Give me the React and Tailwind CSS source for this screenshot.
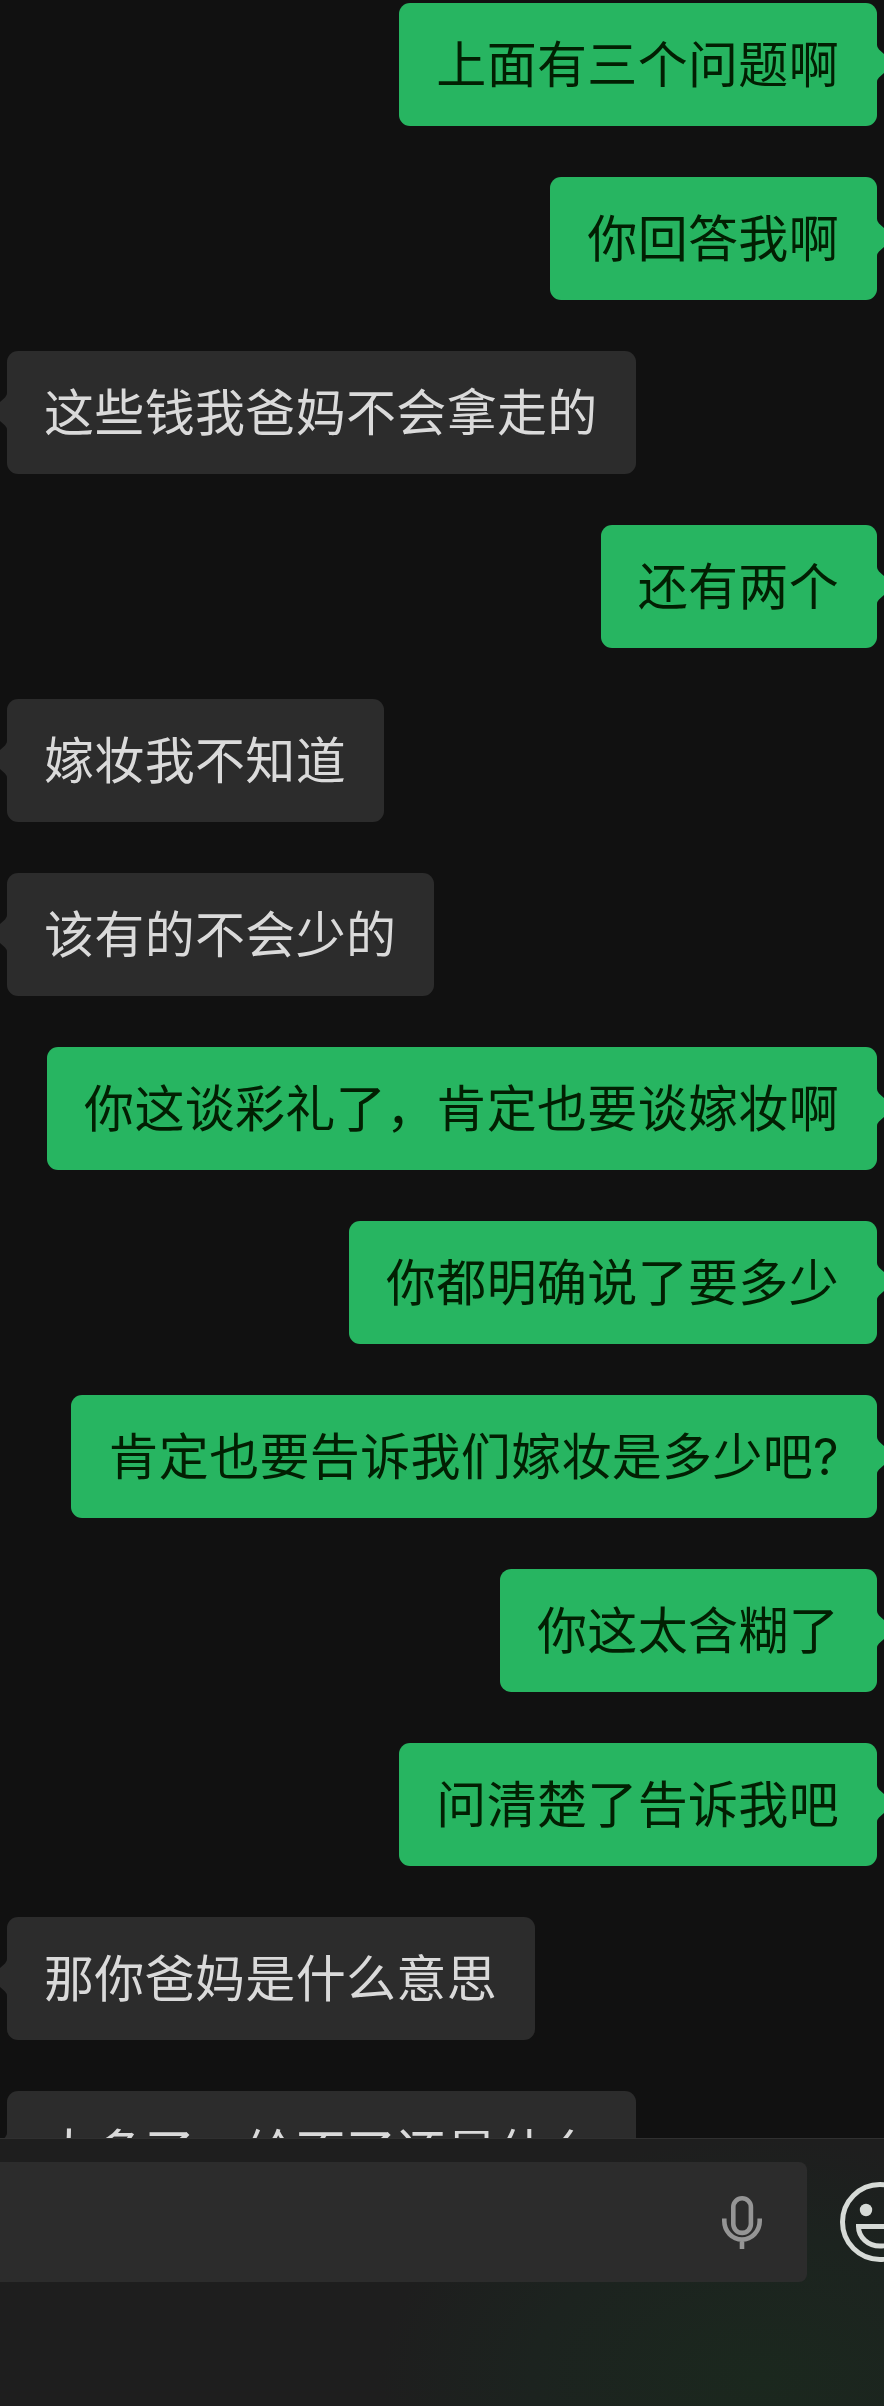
const messages = [
    { id: 1, mine: true, text: "上面有三个问题啊" },
    { id: 2, mine: true, text: "你回答我啊" },
    { id: 3, mine: false, text: "这些钱我爸妈不会拿走的" },
    { id: 4, mine: true, text: "还有两个" },
    { id: 5, mine: false, text: "嫁妆我不知道" },
    { id: 6, mine: false, text: "该有的不会少的" },
    { id: 7, mine: true, text: "你这谈彩礼了，肯定也要谈嫁妆啊" },
    { id: 8, mine: true, text: "你都明确说了要多少" },
    { id: 9, mine: true, text: "肯定也要告诉我们嫁妆是多少吧?" },
    { id: 10, mine: true, text: "你这太含糊了" },
    { id: 11, mine: true, text: "问清楚了告诉我吧" },
    { id: 12, mine: false, text: "那你爸妈是什么意思" },
    { id: 13, mine: false, text: "太多了，给不了还是什么" },
];

export default function App() {
    return (
        <div className="flex h-[2406px] w-[884px] flex-col overflow-hidden bg-[#111111] font-['Inter','Noto_Sans_CJK_SC',sans-serif]">
            <div className="flex h-[2138px] shrink-0 flex-col gap-[51px] overflow-hidden px-[7px] pt-[3px]">
                {messages.map(m => (
                    <Bubble key={m.id} mine={m.mine} text={m.text} />
                ))}
            </div>
            <Composer />
        </div>
    );
}

function Bubble({ mine, text }) {
    return (
        <div
            className={`relative flex h-[123px] shrink-0 items-center rounded-[11px] pr-[38px] pl-[37px] text-[50px] leading-none tracking-[0.33px] whitespace-nowrap ${mine
                ? "self-end bg-[#27b561] text-[#021f02]"
                : "self-start bg-[#2c2c2c] text-[#dadada]"
                }`}
        >
            <span>{text}</span>
            <Tail mine={mine} />
        </div>
    );
}

// Little pointer towards the avatar, flipped for incoming messages
function Tail({ mine }) {
    return (
        <svg
            viewBox="0 0 7 37"
            className={`absolute top-[42px] h-[37px] w-[7px] ${mine ? "left-full text-[#27b561]" : "right-full -scale-x-100 text-[#2c2c2c]"}`}
        >
            <path d="M0 0Q0 2.500 2 4.500L7 9V28L2 32.500Q0 34.500 0 37Z" fill="currentColor" />
        </svg>
    );
}

function Composer() {
    return (
        <div className="flex-1 border-t border-[#303030] bg-[#1e1e1e] bg-[radial-gradient(ellipse_380px_240px_at_760px_240px,#1b281e,#1c231f_60%,#1e1e1e)] pt-[23px]">
            <div className="flex items-center gap-[33px]">
                <div className="flex h-[120px] w-[807px] shrink-0 items-center justify-end rounded-r-lg bg-[#2c2c2c] pr-[45px]">
                    <MicIcon />
                </div>
                <SmileIcon />
            </div>
        </div>
    );
}

function MicIcon() {
    return (
        <svg viewBox="0 0 40 53" className="h-[53px] w-10" fill="none" stroke="#959595" strokeWidth="4.6">
            <rect x="11.3" y="2.3" width="17.6" height="34.6" rx="8.8" />
            <path d="M2.3 22.5V25a17.7 18.500 0 0 0 35.4 0V22.500M20 43V53" />
        </svg>
    );
}

function SmileIcon() {
    return (
        <svg viewBox="0 0 80 80" className="h-20 w-20 shrink-0" fill="none" stroke="#d7dbd7" strokeWidth="5">
            <circle cx="40" cy="40" r="37.5" />
            <circle cx="26" cy="28" r="6.2" fill="#d7dbd7" stroke="none" />
            <circle cx="54" cy="28" r="6.2" fill="#d7dbd7" stroke="none" />
            <path d="M18.5 44.5H61.5A21.5 19.5 0 0 1 18.5 44.5Z" />
        </svg>
    );
}
